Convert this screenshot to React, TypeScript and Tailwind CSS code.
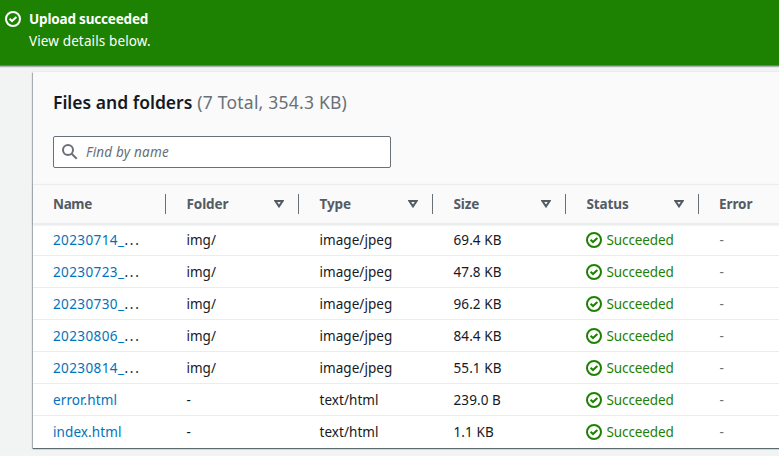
const files = [
  { name: "20230714_", truncated: true, folder: "img/", type: "image/jpeg", size: "69.4 KB" },
  { name: "20230723_", truncated: true, folder: "img/", type: "image/jpeg", size: "47.8 KB" },
  { name: "20230730_", truncated: true, folder: "img/", type: "image/jpeg", size: "96.2 KB" },
  { name: "20230806_", truncated: true, folder: "img/", type: "image/jpeg", size: "84.4 KB" },
  { name: "20230814_", truncated: true, folder: "img/", type: "image/jpeg", size: "55.1 KB" },
  { name: "error.html", truncated: false, folder: "-", type: "text/html", size: "239.0 B" },
  { name: "index.html", truncated: false, folder: "-", type: "text/html", size: "1.1 KB" },
];

const columns = ["Name", "Folder", "Type", "Size", "Status", "Error"];

const grid = "grid grid-cols-[133px_133px_134px_133px_133px_133px]";

function CheckIcon() {
  return (
    <svg viewBox="0 0 16 16" className="size-4 shrink-0" fill="none" stroke="currentColor" strokeWidth="2">
      <circle cx="8" cy="8" r="7" />
      <path d="M4.6 7.7 7 10 11.4 5.9" />
    </svg>
  );
}

function SortIcon() {
  return (
    <svg viewBox="0 0 10 8" className="h-2 w-2.5" fill="none" stroke="currentColor" strokeWidth="2" strokeLinejoin="miter">
      <path d="M1.4 1H8.6L5 6.4Z" />
    </svg>
  );
}

export default function App() {
  return (
    <div className="h-[456px] w-[779px] overflow-hidden bg-[#f2f3f3] font-['Noto_Sans',sans-serif] text-[13.5px] text-[#16191f]">
      <header className="flex h-[66px] gap-2 border-b border-[#5f8a5c] bg-[#1d8102] pt-2 pl-[5px] text-white shadow-[0_1px_1px_rgba(0,28,36,0.3)]">
        <div className="pt-[3px]">
          <CheckIcon />
        </div>
        <div className="leading-[22px]">
          <div className="font-bold tracking-[-0.18px]">Upload succeeded</div>
          <div className="tracking-[0.13px]">View details below.</div>
        </div>
      </header>
      <main className="mt-1.5 ml-[33px] h-[376px] w-[760px] bg-white shadow-[0_1px_1px_0_rgba(0,28,36,0.5),-1px_1px_1px_0_rgba(0,28,36,0.25),0_-1px_1px_0_#eaeded]">
        <div className="h-[112px] bg-[#fafafa] pt-[19px] pl-5">
          <h2 className="flex h-[22px] items-center gap-[5px] text-[17.5px] leading-[22px]">
            <span className="font-semibold">Files and folders</span>
            <span className="tracking-[0.22px] text-[#687078]">(7 Total, 354.3 KB)</span>
          </h2>
          <div className="mt-[23px] flex h-8 w-[338px] items-center rounded-[2px] border border-[#687078] bg-white pl-2 text-[#687078]">
            <svg viewBox="0 0 16 16" className="size-4" fill="none" stroke="currentColor" strokeWidth="2">
              <circle cx="6" cy="6" r="5" />
              <path d="m9.7 9.7 5 5" />
            </svg>
            <span className="ml-2 tracking-[0.2px] italic">Find by name</span>
          </div>
        </div>
        <div className={`${grid} h-10 items-center border-y border-[#eaeded] bg-[#fafafa] font-bold text-[#545b64] shadow-[0_1px_2px_rgba(0,28,36,0.12)]`}>
          {columns.map((label, i) => (
            <div
              key={label}
              className={`flex h-5 items-center justify-between pr-[14px] ${i > 0 && i < 5 ? "pl-[20.5px]" : "pl-5"} ${i < 5 ? "border-r border-[#687078]" : ""}`}
            >
              <span className={i === 0 ? "tracking-[-0.35px]" : "tracking-[-0.1px]"}>{label}</span>
              {i > 0 && i < 5 && <SortIcon />}
            </div>
          ))}
        </div>
        {files.map((file) => (
          <div key={file.name} className={`${grid} h-8 items-center border-b border-[#eaeded] pt-px leading-5 last:border-b-0 last:pt-0`}>
            <div className="pl-5">
              <a className={file.truncated ? "tracking-[0.4px] text-[#0073bb]" : "tracking-[0.1px] text-[#0073bb]"}>{file.name}</a>
              {file.truncated && <span className="tracking-[1.8px]">...</span>}
            </div>
            <span className="pl-[20.5px]">{file.folder}</span>
            <span className="pl-[20.5px] tracking-[0.05px]">{file.type}</span>
            <span className="pl-[20.5px] tracking-[0.1px]">{file.size}</span>
            <span className="flex items-center gap-1 pl-5 text-[#1d8102]">
              <CheckIcon />
              <span className="pl-[0.5px] tracking-[-0.1px]">Succeeded</span>
            </span>
            <span className="pl-[20.5px] text-[#687078]">-</span>
          </div>
        ))}
      </main>
    </div>
  );
}
